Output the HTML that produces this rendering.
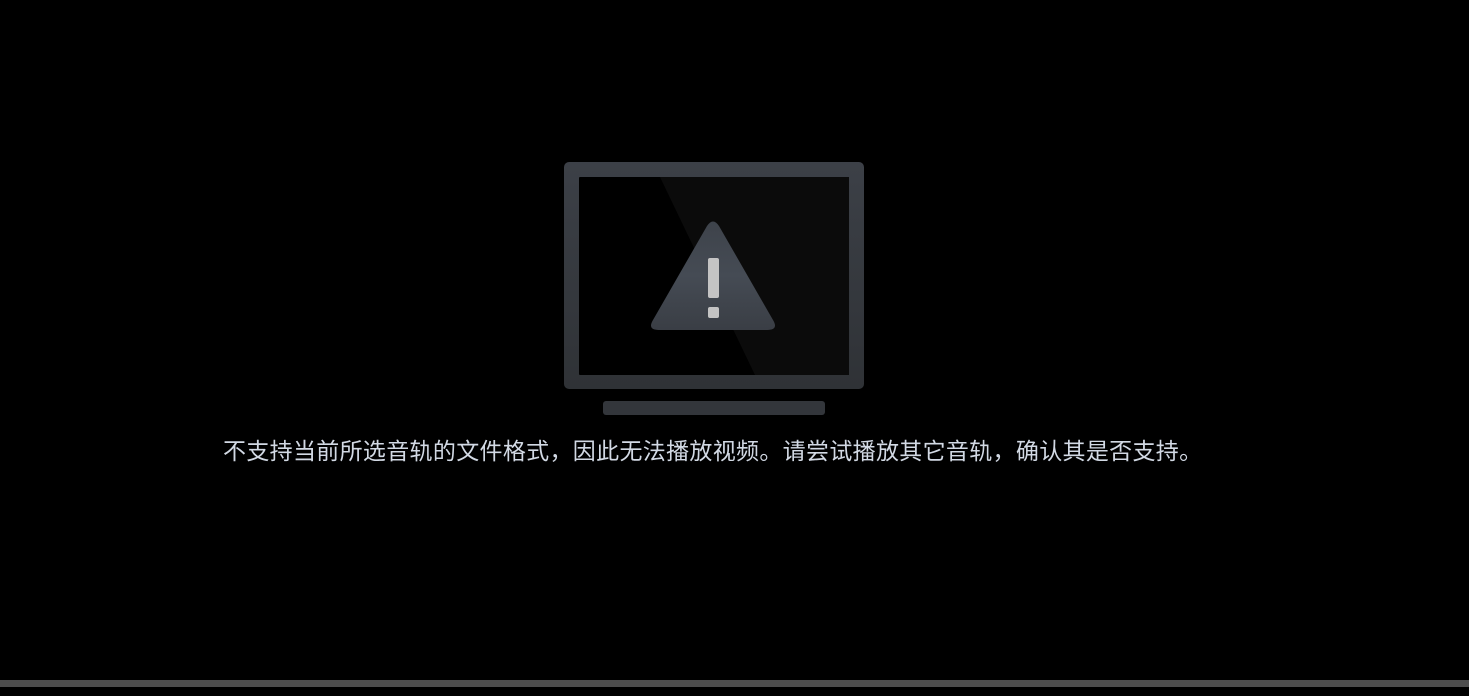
<!DOCTYPE html>
<html><head><meta charset="utf-8"><style>
html,body{margin:0;padding:0;background:#000;width:1469px;height:696px;overflow:hidden;position:relative}
.t{position:absolute;left:223px;top:436px;font-family:"Liberation Sans","Noto Sans CJK SC",sans-serif;font-size:23px;letter-spacing:0.32px;line-height:30px;color:#d2d9e4;white-space:nowrap}
.bar{position:absolute;left:0;top:680px;width:1469px;height:7px;background:#4d4d4d}
</style></head><body>
<svg width="1469" height="696" style="position:absolute;left:0;top:0">
<defs>
<linearGradient id="g" x1="0" y1="0" x2="0" y2="1"><stop offset="0" stop-color="#3c4047"/><stop offset="1" stop-color="#2f3236"/></linearGradient>
<linearGradient id="tg" x1="0" y1="0" x2="0" y2="1"><stop offset="0" stop-color="#3e434b"/><stop offset="0.5" stop-color="#454b54"/><stop offset="1" stop-color="#3a3e45"/></linearGradient>
</defs>
<rect x="564" y="162" width="300" height="227" rx="5" fill="url(#g)"/>
<rect x="579" y="177" width="270" height="198" rx="1" fill="#000"/>
<polygon points="660,177 849,177 849,375 755,375" fill="#0b0b0b"/>
<path d="M707,226 Q713,217 719,226 L773,320 Q779,330 767,330 L659,330 Q647,330 653,320 Z" fill="url(#tg)"/>
<rect x="708" y="258" width="11" height="40" rx="2" fill="#c4c4c4"/>
<rect x="708" y="307" width="11" height="11" rx="2" fill="#c4c4c4"/>
<rect x="603" y="401" width="222" height="14" rx="3" fill="#33363b"/>
</svg>
<div class="t">不支持当前所选音轨的文件格式，因此无法播放视频。请尝试播放其它音轨，确认其是否支持。</div>
<div class="bar"></div>
</body></html>
